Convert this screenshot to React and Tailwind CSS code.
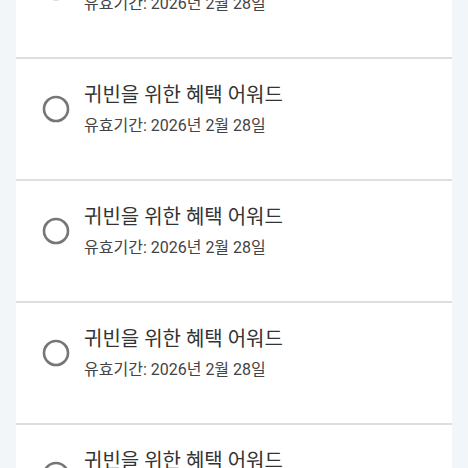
import React from 'react'

const COUPONS = Array.from({ length: 5 }, (_, i) => ({
  id: i,
  title: '귀빈을 위한 혜택 어워드',
  expires: '유효기간: 2026년 2월 28일',
}))

function Radio() {
  return (
    <svg width="28" height="28" viewBox="0 0 28 28" className="shrink-0">
      <circle cx="14" cy="14" r="12" fill="none" stroke="#767676" strokeWidth="2.6" />
    </svg>
  )
}

export default function App() {
  return (
    <div
      className="h-[468px] overflow-hidden bg-[#f3f6f8] px-4"
      style={{ fontFamily: 'Roboto, "Noto Sans CJK KR", sans-serif' }}
    >
      <div className="-mt-[63px] flex flex-col">
        {COUPONS.map((c) => (
          <div key={c.id} className="h-[122px] border-b-2 border-[#dedede] bg-white pl-[26px] pt-[22px]">
            <div className="flex items-center gap-[14px]">
              <Radio />
              <div className="flex flex-col">
                <span className="text-[20px] leading-[28px] text-[#333]">{c.title}</span>
                <span className="mt-[6px] text-[16px] leading-[22px] text-[#444]">{c.expires}</span>
              </div>
            </div>
          </div>
        ))}
      </div>
    </div>
  )
}
